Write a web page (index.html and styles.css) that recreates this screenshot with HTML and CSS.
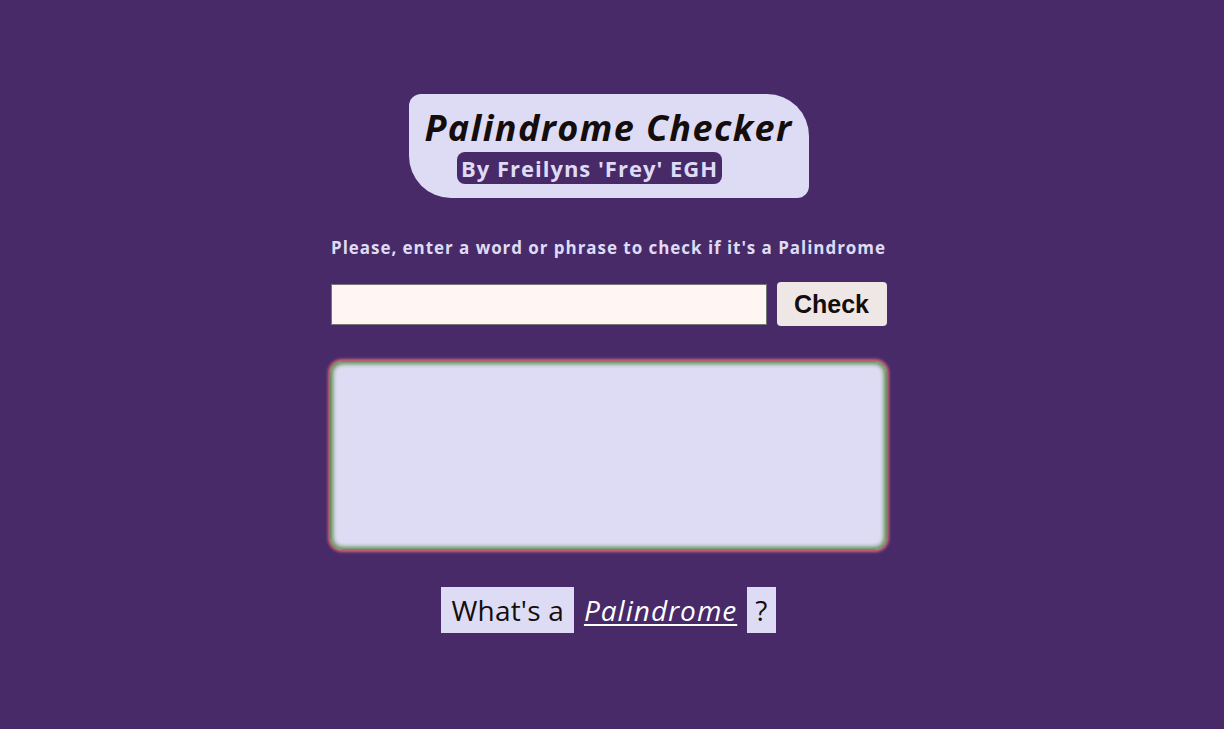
FILE: index.html
```html
<!DOCTYPE html>
<html lang="en">
<head>
<meta charset="utf-8">
<title>Palindrome Checker</title>
<link rel="stylesheet" href="styles.css">
</head>
<body>
<main class="page">
  <header class="title-card">
    <h1 class="title">Palindrome Checker</h1>
    <p class="byline">By Freilyns 'Frey' EGH</p>
  </header>
  <p class="prompt">Please, enter a word or phrase to check if it's a Palindrome</p>
  <form class="check-form">
    <input class="text-input" type="text" aria-label="Text to check">
    <button class="check-btn" type="button">Check</button>
  </form>
  <div class="result"></div>
  <p class="info">
    <span class="info-box">What's a</span>
    <a class="info-link" href="#">Palindrome</a>
    <span class="info-box q">?</span>
  </p>
</main>
</body>
</html>
```
FILE: styles.css
```css
html, body {
  margin: 0;
  padding: 0;
  height: 100%;
}
body {
  background: #482a69;
  font-family: "Open Sans", "Noto Sans", sans-serif;
  overflow: hidden;
}
.page {
  display: flex;
  flex-direction: column;
  align-items: center;
  padding-top: 94px;
  padding-right: 7px;
}
.title-card {
  width: 400px;
  height: 104px;
  box-sizing: border-box;
  background: #dedcf4;
  border-radius: 12px 42px 12px 42px;
  display: flex;
  flex-direction: column;
  align-items: center;
  padding-top: 12px;
}
.title {
  margin: 0;
  font-size: 36px;
  font-weight: 700;
  font-style: italic;
  color: #140d0c;
  line-height: 44px;
  letter-spacing: 1.4px;
}
.byline {
  margin: 2px 0 0 -38px;
  background: #482a69;
  color: #dedcf4;
  font-weight: 700;
  font-size: 22px;
  line-height: 32px;
  padding: 0 4px;
  border-radius: 8px;
  letter-spacing: 1px;
}
.prompt {
  margin: 38px 0 0;
  color: #dedcf4;
  font-weight: 700;
  font-size: 17px;
  line-height: 24px;
  letter-spacing: 0.95px;
}
.check-form {
  display: flex;
  align-items: center;
  gap: 10px;
  margin-top: 22px;
}
.text-input {
  width: 436px;
  height: 41px;
  box-sizing: border-box;
  border: 1px solid #767676;
  background: #fff5f3;
  margin: 0;
}
.check-btn {
  width: 110px;
  height: 44px;
  border: none;
  border-radius: 4px;
  background: #efe7e6;
  color: #140d0c;
  font-family: "Liberation Sans", Arial, sans-serif;
  font-weight: 700;
  font-size: 25px;
  padding: 0;
}
.result {
  margin-top: 35px;
  width: 557px;
  height: 189px;
  box-sizing: border-box;
  background: #dedcf4;
  border-radius: 12px;
  border: 1px solid #6f8b5c;
  box-shadow: 0 0 3px 2px #c9667a, inset 0 0 4px 2px #5e8a4c;
}
.info {
  margin: 37px 0 0;
  display: flex;
  align-items: center;
  gap: 10px;
  font-size: 28px;
  letter-spacing: 0.2px;
}
.info-box {
  background: #dedcf4;
  color: #140d0c;
  padding: 0 10px;
  line-height: 46px;
}
.info-box.q {
  padding: 0 8px;
}
.info-link {
  color: #ffffff;
  font-style: italic;
  letter-spacing: 1px;
  text-decoration: underline;
  text-decoration-thickness: 2px;
  text-underline-offset: 3px;
}
```
